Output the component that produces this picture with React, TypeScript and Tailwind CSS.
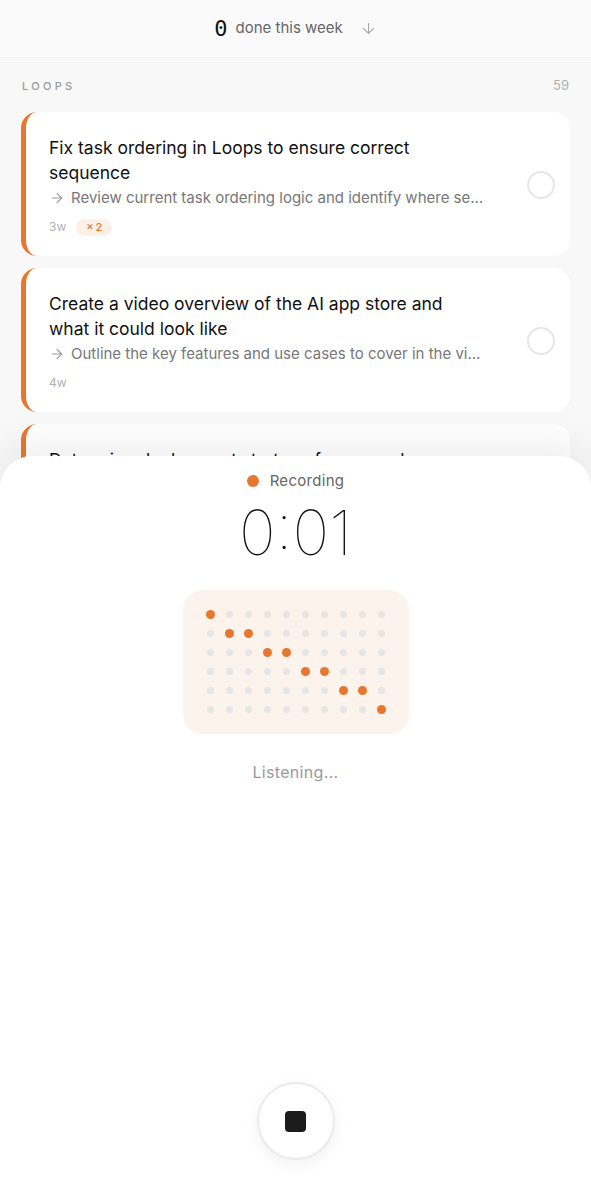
import React from 'react';
import { ArrowDown, ArrowRight } from 'lucide-react';

interface Loop {
  title: string;
  next: string;
  age: string;
  repeats?: number;
}

const loops: Loop[] = [
  {
    title: 'Fix task ordering in Loops to ensure correct sequence',
    next: 'Review current task ordering logic and identify where sequence breaks down',
    age: '3w',
    repeats: 2,
  },
  {
    title: 'Create a video overview of the AI app store and what it could look like',
    next: 'Outline the key features and use cases to cover in the video walkthrough',
    age: '4w',
  },
  {
    title: 'Determine deployment strategy for general purpose agents',
    next: 'List the hosting options and compare their costs',
    age: '4w',
  },
];

// which column is lit in each row of the level meter
const lit: number[][] = [[0], [1, 2], [3, 4], [5, 6], [7, 8], [9]];

const LoopCard: React.FC<{ loop: Loop }> = ({ loop }) => (
  <div className="flex items-center gap-[42px] rounded-2xl border-l-[5px] border-[#e8772e] bg-white pb-[20px] pl-[23px] pr-[15px] pt-[23px]">
    <div className="min-w-0 flex-1">
      <p className="text-[17.5px] font-normal leading-[25px] text-[#111]">{loop.title}</p>
      <div className="mt-[2px] flex items-center gap-[6px] text-[15px] leading-[22px] text-[#777]">
        <ArrowRight size={16} strokeWidth={1.6} className="shrink-0 text-[#999]" />
        <span className="truncate">{loop.next}</span>
      </div>
      <div className="mt-[10px] flex h-[17px] items-center gap-[10px]">
        <span className="text-[12px] text-[#b0b0b0]">{loop.age}</span>
        {loop.repeats && (
          <span className="rounded-full bg-[#fdf0e6] px-[10px] text-[11px] font-medium leading-[17px] text-[#e8772e]">
            ×{'\u2009'}{loop.repeats}
          </span>
        )}
      </div>
    </div>
    <div className="h-[28px] w-[28px] shrink-0 rounded-full border-2 border-[#e6e6e6]" />
  </div>
);

const LevelMeter: React.FC = () => (
  <div className="rounded-[20px] bg-[#fcf3ec] px-[24px] py-[21px]">
    <div className="flex flex-col gap-[12px]">
      {lit.map((cols, r) => (
        <div key={r} className="flex gap-[12px]">
          {Array.from({ length: 10 }).map((_, c) => (
            <div key={c} className="flex h-[7px] w-[7px] items-center justify-center">
              {cols.includes(c) ? (
                <div className="h-[9px] w-[9px] shrink-0 rounded-full bg-[#e8772e]" />
              ) : (
                <div className="h-[7px] w-[7px] shrink-0 rounded-full bg-[#e6e6e6]" />
              )}
            </div>
          ))}
        </div>
      ))}
    </div>
  </div>
);

export default function App() {
  return (
    <div
      className="relative h-[1200px] w-full overflow-hidden bg-[#f8f8f8]"
      style={{ fontFamily: 'Inter, "Noto Sans", "Liberation Sans", sans-serif' }}
    >
      <header className="flex h-[58px] items-center justify-center gap-[8px] border-b border-[#f1f1f1] bg-[#fafafa]">
        <span
          className="text-[22px] leading-none text-[#111]"
          style={{ fontFamily: '"DejaVu Sans Mono", "Liberation Mono", monospace' }}
        >
          0
        </span>
        <span className="text-[15px] text-[#666]">done this week</span>
        <ArrowDown size={17} strokeWidth={1.5} className="ml-[9px] text-[#a8a8a8]" />
      </header>

      <div className="flex items-center justify-between px-[22px] pb-[16px] pt-[18px]">
        <span className="text-[11px] font-medium tracking-[0.3em] text-[#999]">LOOPS</span>
        <span className="text-[13px] text-[#b0b0b0]">59</span>
      </div>

      <div className="flex flex-col gap-[12px] px-[21px]">
        {loops.map((loop) => (
          <LoopCard key={loop.title} loop={loop} />
        ))}
      </div>

      <div className="absolute inset-x-0 bottom-0 flex h-[744px] flex-col items-center rounded-t-[32px] bg-white pb-[40px] pt-[16px] shadow-[0_-12px_40px_rgba(0,0,0,0.07)]">
        <div className="flex items-center gap-[11px]">
          <span className="h-[12px] w-[12px] rounded-full bg-[#e8772e]" />
          <span className="text-[15px] leading-[18px] tracking-[0.02em] text-[#666]">Recording</span>
        </div>
        <div className="mt-[8px] text-[62px] font-thin leading-[70px] text-[#111]">0:01</div>
        <div className="mt-[22px]">
          <LevelMeter />
        </div>
        <p className="mt-[26px] text-[16px] tracking-[0.02em] text-[#9a9a9a]">Listening...</p>
        <button className="mt-auto flex h-[78px] w-[78px] items-center justify-center rounded-full border-2 border-[#ebebeb] bg-white shadow-[0_4px_16px_rgba(0,0,0,0.06)]">
          <span className="h-[21px] w-[21px] rounded-[4px] bg-[#1c1c1c]" />
        </button>
      </div>
    </div>
  );
}
